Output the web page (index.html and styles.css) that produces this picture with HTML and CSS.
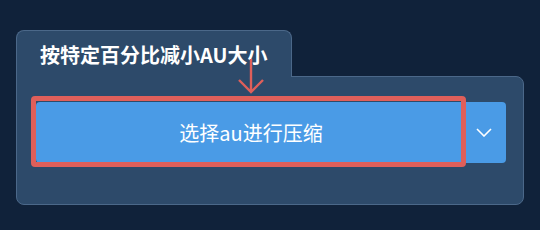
FILE: index.html
```html
<!DOCTYPE html>
<html>
  <head>
    <meta charset="utf-8">
    <title>AU compress</title>
    <link rel="stylesheet" href="styles.css">
  </head>
  <body>
    <div class="card">
      <div class="tab">按特定百分比减小AU大小</div>
      <div class="panel">
        <div class="split">
          <button class="main">选择au进行压缩</button>
          <button class="drop">
            <svg width="16" height="9" viewBox="0 0 16 9"><path d="M1 1 L8 8 L15 1" fill="none" stroke="#fff" stroke-width="1.6"/></svg>
          </button>
          <div class="mark"></div>
        </div>
      </div>
      <svg class="arrow" width="30" height="36" viewBox="0 0 30 36">
        <path d="M14 0 V33 M2 21 L14 33 L26 21" fill="none" stroke="#df5f5a" stroke-width="2.4"/>
      </svg>
    </div>
  </body>
</html>
```
FILE: styles.css
```css
html, body {
  margin:0;
  background:#10223a;
}
body {
  padding:30px 16px 0;
  font-family:"Noto Sans CJK SC", "Noto Sans", sans-serif;
}
.card {
  position:relative;
  width:508px;
}
.tab {
  position:relative;
  z-index:1;
  width:274px;
  height:44px;
  margin-bottom:-1px;
  padding-top:2px;
  background:#2d4a6a;
  border:1px solid #4b6889;
  border-bottom:none;
  border-radius:8px 8px 0 0;
  color:#fff;
  font-size:20px;
  font-weight:bold;
  line-height:24px;
  text-indent:23px;
  display:flex;
  align-items:center;
}
.panel {
  background:#2d4a6a;
  border:1px solid #4b6889;
  border-radius:0 8px 8px 8px;
  padding:25px 17px 41px 19px;
}
.split {
  position:relative;
  display:flex;
  height:61px;
}
.split button {
  border:none;
  background:#4a9be6;
  color:#fff;
  font-family:inherit;
  font-size:20px;
  margin:0;
  padding:0;
}
.main {
  flex:1;
  border-radius:4px 0 0 4px;
}
.drop {
  width:40px;
  border-radius:0 4px 4px 0;
  display:flex;
  align-items:center;
  justify-content:center;
  padding-right:4px !important;
}
.mark {
  position:absolute;
  left:-5px;
  top:-6px;
  width:425px;
  height:61px;
  border:5px solid #df5f5a;
  border-radius:4px;
}
.arrow {
  position:absolute;
  z-index:2;
  left:221px;
  top:29px;
}
```
